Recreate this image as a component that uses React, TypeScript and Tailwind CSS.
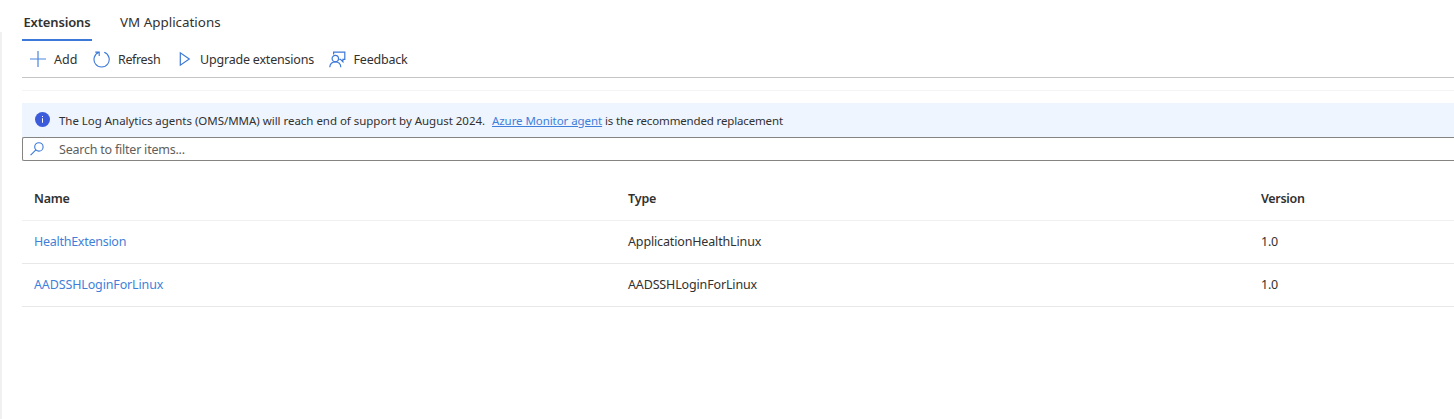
const items = [
  { name: "HealthExtension", type: "ApplicationHealthLinux", version: "1.0", tracking: "tracking-[-0.27px]" },
  { name: "AADSSHLoginForLinux", type: "AADSSHLoginForLinux", version: "1.0", tracking: "tracking-[-0.14px]" },
];
const cols = "grid grid-cols-[594px_633px_1fr] items-center pl-3";

function AddIcon() {
  return (
    <svg className="size-4" viewBox="0 0 16 16" fill="none" stroke="#4a86dd" strokeWidth="1.2">
      <path d="M8 0v16M0 8h16" />
    </svg>
  );
}

function RefreshIcon() {
  return (
    <svg className="size-[17px]" viewBox="0 0 17 17" fill="none" stroke="#3b78d8" strokeWidth="1.1">
      <path d="M11.2 1.3A7.6 7.6 0 1 1 6 1.3M2.3 1.1h3.9v3.9" />
    </svg>
  );
}

function PlayIcon() {
  return (
    <svg className="h-4 w-3" viewBox="0 0 12 16" fill="none" stroke="#3b78d8" strokeWidth="1.2">
      <path d="M1.3 1.8v12.4l9-6.2z" />
    </svg>
  );
}

function FeedbackIcon() {
  return (
    <svg className="size-[17px]" viewBox="0 0 17 17" fill="none" stroke="#3b78d8" strokeWidth="1.2">
      <path d="M4.6 3.5V1.2h11.2v7.2h-1.9v2.4l-2.4-2.4h-1.2" />
      <circle cx="6.3" cy="7.6" r="3.2" />
      <path d="M.8 16.2c0-3.2 2.4-5.4 5.5-5.4s5.5 2.2 5.5 5.4" />
    </svg>
  );
}

function InfoIcon() {
  return (
    <svg className="mb-0.5 size-[15px]" viewBox="0 0 15 15">
      <circle cx="7.5" cy="7.5" r="7.5" fill="#3b5bdb" />
      <path d="M7 6.2h1v4.6H7zM7 4h1v1.1H7z" fill="#fff" />
    </svg>
  );
}

function SearchIcon() {
  return (
    <svg className="mb-px size-[14px]" viewBox="0 0 14 14" fill="none" stroke="#3b78d8" strokeWidth="1.1">
      <circle cx="8.9" cy="4.9" r="4.2" />
      <path d="M5.9 7.9.6 13.2" />
    </svg>
  );
}

export default function App() {
  return (
    <div className="flex h-[419px] w-full overflow-hidden bg-white font-['Noto_Sans',sans-serif] text-[12.5px] leading-5 whitespace-nowrap text-[#323130]">
      <div className="mt-8 w-0.5 shrink-0 bg-[#f0f0f0]" />
      <main className="ml-5 min-w-0 flex-1">
        <nav className="flex h-[41px] gap-7">
          <div className="flex w-[70px] items-center border-b-2 border-[#3b78d8] pt-[5px] pl-[1.5px] text-[13px] font-semibold tracking-[-0.15px]">Extensions</div>
          <div className="flex items-center pt-[3px] text-[13.4px]">VM Applications</div>
        </nav>
        <div className="flex h-[37px] items-center border-b border-[#c8c6c4]">
          <div className="flex w-[71px] items-center gap-2 pl-2"><AddIcon /><span className="pt-0.5">Add</span></div>
          <div className="flex w-[86px] items-center gap-2"><RefreshIcon /><span className="pt-0.5 tracking-[-0.36px]">Refresh</span></div>
          <div className="flex w-[150px] items-center gap-[9px]"><PlayIcon /><span className="pt-0.5 tracking-[-0.2px]">Upgrade extensions</span></div>
          <div className="flex items-center gap-[7.5px]"><FeedbackIcon /><span className="pt-0.5 tracking-[-0.2px]">Feedback</span></div>
        </div>
        <div className="h-[13px] border-b border-[#f5f5f5]" />
        <div className="mt-3 flex h-[34px] items-center bg-[#eef5ff] pl-[13px] text-[11.5px]">
          <InfoIcon />
          <p className="flex pt-0.5 pl-[9px]">
            <span className="w-[433px] tracking-[-0.03px]">The Log Analytics agents (OMS/MMA) will reach end of support by August 2024.</span>
            <a className="w-[113px] tracking-[-0.07px] text-[#3f7fd9] underline">Azure Monitor agent</a>
            <span className="tracking-[-0.15px]">is the recommended replacement</span>
          </p>
        </div>
        <div className="flex h-6 items-center rounded-l-[2px] border border-r-0 border-[#868482] pl-[7px] text-[#605e5c]">
          <SearchIcon />
          <span className="pt-0.5 pl-[15px] tracking-[-0.22px]">Search to filter items...</span>
        </div>
        <div className={`${cols} mt-[17px] h-[43px] border-b border-[#f0f0f0] font-semibold`}>
          <span className="tracking-[-0.25px]">Name</span>
          <span className="tracking-[-0.15px]">Type</span>
          <span className="tracking-[-0.3px]">Version</span>
        </div>
        {items.map((item) => (
          <div key={item.name} className={`${cols} h-[43px] border-b border-[#e8e8e8]`}>
            <a className={`${item.tracking} text-[#3f7fd9]`}>{item.name}</a>
            <span className="tracking-[-0.15px]">{item.type}</span>
            <span className="tracking-[-0.25px]">{item.version}</span>
          </div>
        ))}
      </main>
    </div>
  );
}
